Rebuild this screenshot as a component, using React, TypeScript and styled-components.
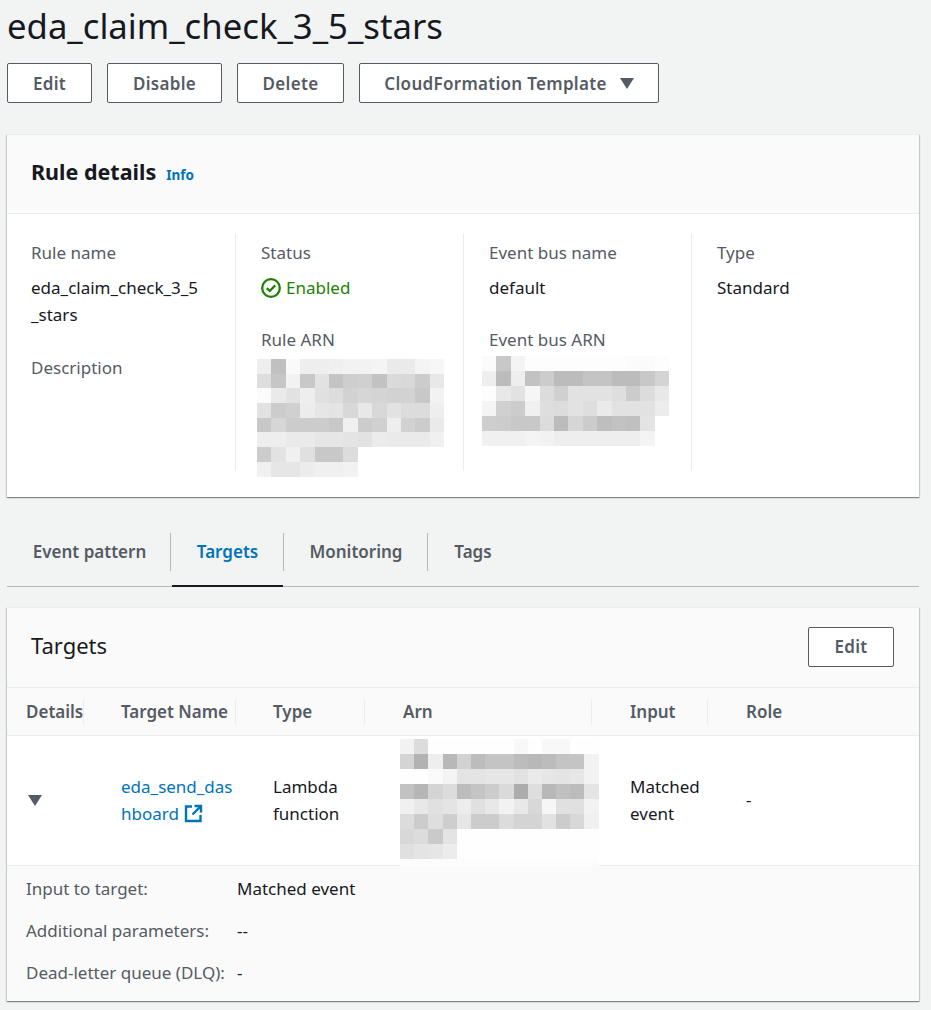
import React from "react";
import styled, { createGlobalStyle } from "styled-components";

const colors = {
  page: "#f2f3f3",
  text: "#16191f",
  label: "#545b64",
  link: "#0073bb",
  green: "#1d8102",
  line: "#eaeded",
  header: "#fafafa",
  rule: "#b4b8b8",
};

const ruleArn = [
  "ee c0 fa ee ee f0 f2 f2 f4 ea ea f4 f7",
  "de c6 f2 c8 e2 c4 ce d0 c2 da d8 cc e8",
  "fb ea e2 ee e0 dc d2 d6 d4 d2 d2 c8 f2",
  "e2 cc d0 ec e6 e4 d8 e8 d8 e2 dc dc ee",
  "c8 d6 cc cc cc c8 f0 cc d0 ee d2 cc ea",
  "ee ee ea ea e6 e6 e4 e2 ec ea ea ea f0",
  "cc e2 f0 e0 c8 c8 dc",
  "f0 e6 e6 ec f0 f0 f2",
];

const busArn = [
  "fb c8 f4 fd fd fd fd fd fd fd fb fb fd",
  "ee bc ee c2 cc bc bc c4 c4 bc bc c8 d4",
  "fd e8 e2 f6 dc d0 e2 e2 e2 de cc dc e8",
  "f4 d0 cc f0 de dc e2 de ea e2 e2 e2 ec",
  "ce cc c8 c8 dc bc d6 cc be c2 c0 e4",
  "f0 f0 f0 f4 f2 ee ee ee ee ee ee f4",
];

const targetArn = [
  "f2 dc fe fe fe fe fe fe f8 fe f8 f8 fe fe",
  "d4 b2 ee b8 d2 bc c4 c4 bc b8 bc c4 c4 f2",
  "fe fe fa f4 e4 e4 e6 e6 e2 ea e6 e4 e6 f2",
  "c2 b6 d4 dc bc c4 cc da ac de b8 c0 bc e4",
  "f0 e8 e0 e4 ec e0 e8 f2 e8 d8 f6 e0 e0 f2",
  "dc cc de ce e6 cc cc dc d4 d4 e2 cc d8 f0",
  "d8 dc ca e4 fe fe fe fe fe fe fe fe fe fe",
  "e0 e4 e6 ec fe fe fe fe fe fe fe fe fe fe",
  "fc fc fc fc fc fc fc fc fc fc fc fc fc fc",
];

const Global = createGlobalStyle`
  html, body {
    margin: 0;
    background: ${colors.page};
  }
  body {
    font-family: "Noto Sans", "Liberation Sans", sans-serif;
    font-size: 17px;
    color: ${colors.text};
  }
`;

const Page = styled.div`
  width: 931px;
  height: 1010px;
  box-sizing: border-box;
  padding: 0 12px 0 7px;
  overflow: hidden;
`;

const Title = styled.h1`
  margin: 0;
  height: 63px;
  font-size: 34.7px;
  line-height: 52px;
  font-weight: 400;
`;

const Actions = styled.div`
  display: flex;
  gap: 15px;
`;

const Button = styled.button<{ $width: number }>`
  width: ${(p) => p.$width}px;
  height: 40px;
  display: flex;
  align-items: center;
  justify-content: center;
  gap: 13px;
  padding: 0;
  background: #fff;
  border: 1px solid ${colors.label};
  border-radius: 2px;
  color: ${colors.label};
  font-family: inherit;
  font-size: 17px;
  font-weight: 600;
  letter-spacing: 0.3px;
`;

const HeaderButton = styled(Button)`
  margin-top: -2px;
`;

const Caret = styled.span`
  width: 0;
  height: 0;
  border-left: 7px solid transparent;
  border-right: 7px solid transparent;
  border-top: 11px solid ${colors.label};
`;

const Card = styled.section<{ $top: number; $height: number }>`
  margin-top: ${(p) => p.$top}px;
  height: ${(p) => p.$height}px;
  box-sizing: border-box;
  display: flex;
  flex-direction: column;
  background: #fff;
  border-top: 1px solid ${colors.line};
  box-shadow: 0 1px 1px 0 rgba(0, 28, 36, 0.3), 1px 1px 1px 0 rgba(0, 28, 36, 0.15),
    -1px 1px 1px 0 rgba(0, 28, 36, 0.15);
`;

const CardHeader = styled.header`
  height: 80px;
  flex: none;
  box-sizing: border-box;
  display: flex;
  align-items: center;
  justify-content: space-between;
  padding: 0 25px 0 24px;
  background: ${colors.header};
  border-bottom: 1px solid ${colors.line};
`;

const RuleHeader = styled(CardHeader)`
  height: 79px;
`;

const HeaderTitle = styled.div`
  display: flex;
  align-items: baseline;
  gap: 10px;
  margin-top: -5px;
`;

const RuleHeading = styled.h2`
  margin: 0;
  font-size: 21.5px;
  font-weight: 700;
`;

const InfoLink = styled.a`
  color: ${colors.link};
  font-size: 13.5px;
  font-weight: 700;
`;

const TargetsHeading = styled.h2`
  margin: -5px 0 0;
  font-size: 22px;
  font-weight: 400;
`;

const DetailGrid = styled.div`
  display: grid;
  grid-template-columns: repeat(4, 228px);
  padding-top: 20px;
`;

const DetailColumn = styled.div`
  height: 237px;
  box-sizing: border-box;
  padding-left: 25px;
  border-left: 1px solid ${colors.line};
  &:first-child {
    padding-left: 24px;
    padding-right: 30px;
    border-left: none;
  }
`;

const Field = styled.div`
  margin-bottom: 20px;
`;

const NameField = styled(Field)`
  margin-bottom: 21px;
`;

const Label = styled.div`
  color: ${colors.label};
  line-height: 27px;
  height: 35px;
  padding-top: 5px;
`;

const Value = styled.div`
  line-height: 27px;
  word-break: break-all;
`;

const Status = styled.div`
  display: flex;
  align-items: center;
  gap: 5px;
  color: ${colors.green};
  line-height: 27px;
`;

const Mosaic = styled.div<{ $cellW: number; $cellH: number }>`
  display: flex;
  flex-direction: column;
  margin: -2px 0 0 -4px;
  & > div {
    display: flex;
    height: ${(p) => p.$cellH}px;
  }
  & span {
    width: ${(p) => p.$cellW}px;
    flex: none;
  }
`;

const BusMosaic = styled(Mosaic)`
  margin: -5px 0 0 -7px;
`;

const ArnMosaic = styled(Mosaic)`
  margin: 0 0 0 -2px;
`;

const Tabs = styled.nav`
  margin-top: 34px;
  height: 56px;
  box-sizing: border-box;
  display: flex;
  align-items: stretch;
  border-bottom: 1px solid ${colors.rule};
`;

const Tab = styled.a<{ $active?: boolean; $width: number }>`
  width: ${(p) => p.$width}px;
  box-sizing: border-box;
  position: relative;
  display: flex;
  align-items: center;
  justify-content: center;
  padding: 0 0 15px 2px;
  font-weight: 600;
  color: ${(p) => (p.$active ? colors.link : colors.label)};
  &:not(:first-child)::before {
    content: "";
    position: absolute;
    left: 0;
    top: 2px;
    bottom: 15px;
    width: 1px;
    background: ${colors.rule};
  }
  ${(p) =>
    p.$active &&
    `
    &::after {
      content: "";
      position: absolute;
      left: 2px;
      right: 0;
      bottom: -1px;
      height: 2px;
      background: ${colors.text};
    }
  `}
`;

const TableHead = styled.div`
  height: 48px;
  flex: none;
  box-sizing: border-box;
  display: grid;
  grid-template-columns: 76px 152px 129px 227px 116px 1fr;
  align-items: center;
  background: ${colors.header};
  border-bottom: 1px solid ${colors.line};
`;

const HeadCell = styled.div`
  height: 24px;
  line-height: 24px;
  padding-left: 37px;
  box-sizing: border-box;
  font-weight: 600;
  color: ${colors.label};
  border-left: 1px solid ${colors.line};
  white-space: nowrap;
  &:first-child {
    padding-left: 19px;
    border-left: none;
  }
  &:nth-child(n + 4) {
    padding-left: 38px;
  }
`;

const TableRow = styled.div`
  height: 130px;
  flex: none;
  box-sizing: border-box;
  display: grid;
  grid-template-columns: 76px 152px 129px 227px 116px 1fr;
  align-items: center;
  border-bottom: 1px solid ${colors.line};
`;

const BodyCell = styled.div`
  padding: 0 0 2px 38px;
  line-height: 27px;
  box-sizing: border-box;
  word-break: break-all;
`;

const CaretCell = styled.div`
  padding-left: 21px;
`;

const WordCell = styled(BodyCell)`
  word-break: normal;
  padding-right: 30px;
`;

const InputCell = styled(WordCell)`
  padding-left: 39px;
`;

const RoleCell = styled(BodyCell)`
  padding-left: 39px;
`;

const ArnCell = styled(BodyCell)`
  align-self: start;
  padding-top: 3px;
  height: 129px;
`;

const ExpandCaret = styled(Caret)`
  display: block;
`;

const TargetLink = styled.a`
  color: ${colors.link};
`;

const ExpandedRows = styled.div`
  flex: 1;
  padding: 1px 19px 0;
  background: ${colors.header};
`;

const ExpandedRow = styled.div`
  display: grid;
  grid-template-columns: 211px 1fr;
  height: 42px;
  align-items: center;
`;

const ExpandedLabel = styled.div`
  color: ${colors.label};
  white-space: nowrap;
`;

const ExternalSvg = styled.svg`
  vertical-align: -3px;
  margin-left: 5px;
`;

const ExternalIcon = () => (
  <ExternalSvg width="19" height="19" viewBox="0 0 19 19" fill="none" stroke={colors.link} strokeWidth="2.4">
    <path d="M8 2.5H2v14.5h14.5v-6" />
    <path d="M10.5 2h6.5v6.5M17 2 8.5 10.5" />
  </ExternalSvg>
);

const CheckIcon = () => (
  <svg width="20" height="20" viewBox="0 0 20 20" fill="none" stroke={colors.green} strokeWidth="2.3">
    <circle cx="10" cy="10" r="8.8" />
    <path d="M5.8 10.2 8.8 13l5.4-5.6" />
  </svg>
);

const Redacted = ({ rows, as: Wrapper, cellW, cellH }: {
  rows: string[];
  as: typeof Mosaic;
  cellW: number;
  cellH: number;
}) => (
  <Wrapper $cellW={cellW} $cellH={cellH}>
    {rows.map((row, i) => (
      <div key={i}>
        {row.split(" ").map((g, j) => (
          <span key={j} style={{ background: `#${g}${g}${g}` }} />
        ))}
      </div>
    ))}
  </Wrapper>
);

export default function App() {
  return (
    <Page>
      <Global />
      <Title>eda_claim_check_3_5_stars</Title>
      <Actions>
        <Button $width={85}>Edit</Button>
        <Button $width={115}>Disable</Button>
        <Button $width={107}>Delete</Button>
        <Button $width={300}>
          CloudFormation Template <Caret />
        </Button>
      </Actions>

      <Card $top={31} $height={363}>
        <RuleHeader>
          <HeaderTitle>
            <RuleHeading>Rule details</RuleHeading>
            <InfoLink>Info</InfoLink>
          </HeaderTitle>
        </RuleHeader>
        <DetailGrid>
          <DetailColumn>
            <NameField>
              <Label>Rule name</Label>
              <Value>eda_claim_check_3_5_stars</Value>
            </NameField>
            <Field>
              <Label>Description</Label>
            </Field>
          </DetailColumn>
          <DetailColumn>
            <Field>
              <Label>Status</Label>
              <Status>
                <CheckIcon /> Enabled
              </Status>
            </Field>
            <Field>
              <Label>Rule ARN</Label>
              <Redacted rows={ruleArn} as={Mosaic} cellW={14.4} cellH={14.7} />
            </Field>
          </DetailColumn>
          <DetailColumn>
            <Field>
              <Label>Event bus name</Label>
              <Value>default</Value>
            </Field>
            <Field>
              <Label>Event bus ARN</Label>
              <Redacted rows={busArn} as={BusMosaic} cellW={14.4} cellH={15} />
            </Field>
          </DetailColumn>
          <DetailColumn>
            <Field>
              <Label>Type</Label>
              <Value>Standard</Value>
            </Field>
          </DetailColumn>
        </DetailGrid>
      </Card>

      <Tabs>
        <Tab $width={163}>Event pattern</Tab>
        <Tab $width={113} $active>Targets</Tab>
        <Tab $width={144}>Monitoring</Tab>
        <Tab $width={90}>Tags</Tab>
      </Tabs>

      <Card $top={20} $height={394}>
        <CardHeader>
          <TargetsHeading>Targets</TargetsHeading>
          <HeaderButton $width={86}>Edit</HeaderButton>
        </CardHeader>
        <TableHead>
          <HeadCell>Details</HeadCell>
          <HeadCell>Target Name</HeadCell>
          <HeadCell>Type</HeadCell>
          <HeadCell>Arn</HeadCell>
          <HeadCell>Input</HeadCell>
          <HeadCell>Role</HeadCell>
        </TableHead>
        <TableRow>
          <CaretCell>
            <ExpandCaret />
          </CaretCell>
          <BodyCell>
            <TargetLink>
              eda_send_dashboard
              <ExternalIcon />
            </TargetLink>
          </BodyCell>
          <WordCell>Lambda function</WordCell>
          <ArnCell>
            <Redacted rows={targetArn} as={ArnMosaic} cellW={14.2} cellH={15} />
          </ArnCell>
          <InputCell>Matched event</InputCell>
          <RoleCell>-</RoleCell>
        </TableRow>
        <ExpandedRows>
          <ExpandedRow>
            <ExpandedLabel>Input to target:</ExpandedLabel>
            <div>Matched event</div>
          </ExpandedRow>
          <ExpandedRow>
            <ExpandedLabel>Additional parameters:</ExpandedLabel>
            <div>--</div>
          </ExpandedRow>
          <ExpandedRow>
            <ExpandedLabel>Dead-letter queue (DLQ):</ExpandedLabel>
            <div>-</div>
          </ExpandedRow>
        </ExpandedRows>
      </Card>
    </Page>
  );
}
